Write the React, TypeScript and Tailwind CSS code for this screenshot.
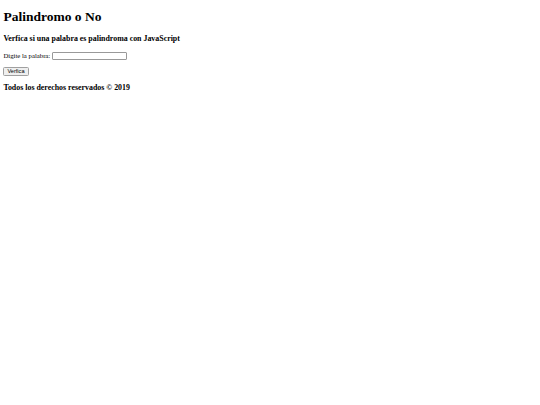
export default function App() {
  return (
    <div className="flex min-h-screen flex-col items-start bg-white px-[3.4px] pt-[9.2px] font-['Liberation_Serif',serif] text-black">
      <h1 className="text-[13.5px] font-bold leading-[15.6px]">Palindromo o No</h1>
      <h3 className="mt-[9.7px] text-[7.9px] font-bold leading-[9px]">
        Verfica si una palabra es palindroma con JavaScript
      </h3>
      <div className="mt-[8px] flex h-[9px] items-center gap-[1.5px] text-[6.75px] leading-[9px]">
        <label htmlFor="palabra">Digite la palabra:</label>
        <input
          id="palabra"
          type="text"
          className="h-[8.5px] w-[75px] rounded-[1px] border border-[#999999] bg-white"
        />
      </div>
      <button className="mt-[6.3px] h-[9.5px] rounded-[1.5px] border border-[#a0a0a0] bg-[#efefef] px-[3px] font-['Liberation_Sans',sans-serif] text-[5.6px] leading-[7px]">
        Verfica
      </button>
      <h3 className="mt-[6.3px] text-[7.9px] font-bold leading-[9px]">Todos los derechos reservados © 2019</h3>
    </div>
  );
}
